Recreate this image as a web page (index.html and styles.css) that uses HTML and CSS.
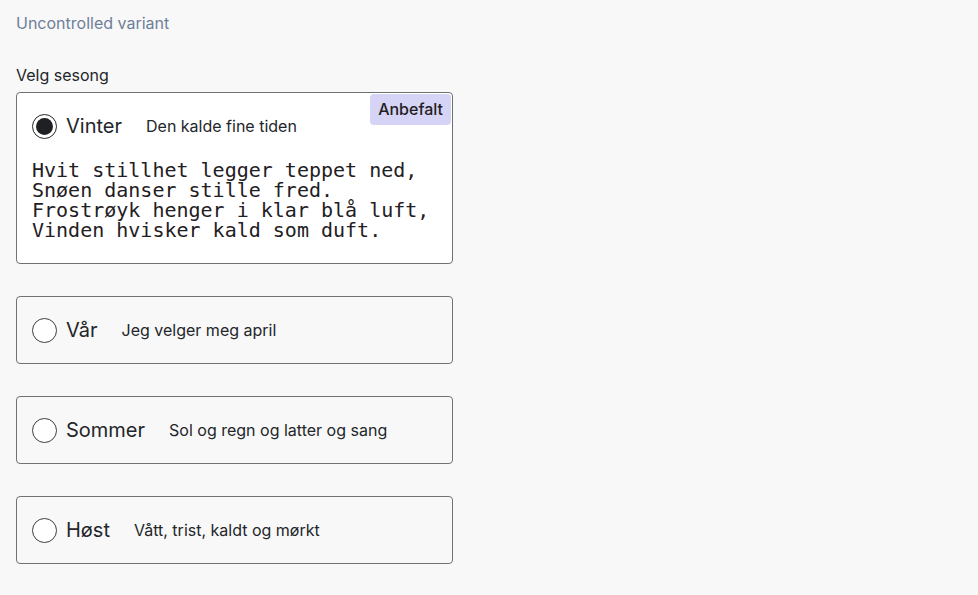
FILE: index.html
```html
<!DOCTYPE html>
<html lang="no">
<head>
<meta charset="utf-8">
<link rel="stylesheet" href="styles.css">
</head>
<body>
<main class="page">
  <h2 class="variant-title">Uncontrolled variant</h2>
  <fieldset class="group">
    <legend class="group-label">Velg sesong</legend>
    <div class="options">
      <label class="option option--checked">
        <span class="badge">Anbefalt</span>
        <span class="option-row">
          <span class="radio radio--checked"><span class="radio-dot"></span></span>
          <span class="option-label">Vinter</span>
          <span class="option-desc">Den kalde fine tiden</span>
        </span>
        <pre class="poem">Hvit stillhet legger teppet ned,
Snøen danser stille fred.
Frostrøyk henger i klar blå luft,
Vinden hvisker kald som duft.</pre>
      </label>
      <label class="option">
        <span class="option-row">
          <span class="radio"></span>
          <span class="option-label">Vår</span>
          <span class="option-desc">Jeg velger meg april</span>
        </span>
      </label>
      <label class="option">
        <span class="option-row">
          <span class="radio"></span>
          <span class="option-label">Sommer</span>
          <span class="option-desc">Sol og regn og latter og sang</span>
        </span>
      </label>
      <label class="option">
        <span class="option-row">
          <span class="radio"></span>
          <span class="option-label">Høst</span>
          <span class="option-desc">Vått, trist, kaldt og mørkt</span>
        </span>
      </label>
    </div>
  </fieldset>
</main>
</body>
</html>
```
FILE: styles.css
```css
html, body {
  margin: 0;
  padding: 0;
  background: #f8f8f8;
}
body {
  font-family: Inter, "Noto Sans", "Liberation Sans", sans-serif;
  color: #23262a;
}
.page {
  padding: 11px 16px 16px;
}
.variant-title {
  margin: 0;
  font-size: 16px;
  font-weight: 400;
  line-height: 24px;
  color: #6f7f99;
}
.group {
  margin: 28px 0 0;
  padding: 0;
  border: 0;
  width: 437px;
}
.group-label {
  padding: 0;
  font-size: 16px;
  line-height: 24px;
  margin-bottom: 5px;
}
.options {
  display: flex;
  flex-direction: column;
  gap: 32px;
}
.option {
  position: relative;
  display: block;
  border: 1px solid #707173;
  border-radius: 4px;
  padding: 21px 15px;
  background: #f8f8f8;
}
.option--checked {
  background: #ffffff;
  padding-bottom: 23px;
}
.option-row {
  display: flex;
  align-items: center;
  height: 24px;
}
.radio {
  box-sizing: border-box;
  width: 25px;
  height: 25px;
  border: 1.5px solid #3b3e42;
  border-radius: 50%;
  display: flex;
  align-items: center;
  justify-content: center;
  flex: none;
  background: #fff;
}
.radio--checked {
  border-color: #23262a;
}
.radio-dot {
  width: 17px;
  height: 17px;
  border-radius: 50%;
  background: #1f2023;
}
.option-label {
  margin-left: 9px;
  font-size: 20px;
  line-height: 24px;
}
.option-desc {
  margin-left: 24px;
  font-size: 16px;
  line-height: 24px;
}
.poem {
  margin: 22px 0 0;
  font-family: "DejaVu Sans Mono", "Liberation Mono", monospace;
  font-size: 20px;
  line-height: 20px;
  color: #1f2023;
}
.badge {
  position: absolute;
  top: 1px;
  right: 1px;
  background: #d6d4f6;
  border-radius: 4px;
  padding: 3px 8px 4px;
  font-size: 16px;
  font-weight: 500;
  line-height: 24px;
  color: #1f2023;
}
```
